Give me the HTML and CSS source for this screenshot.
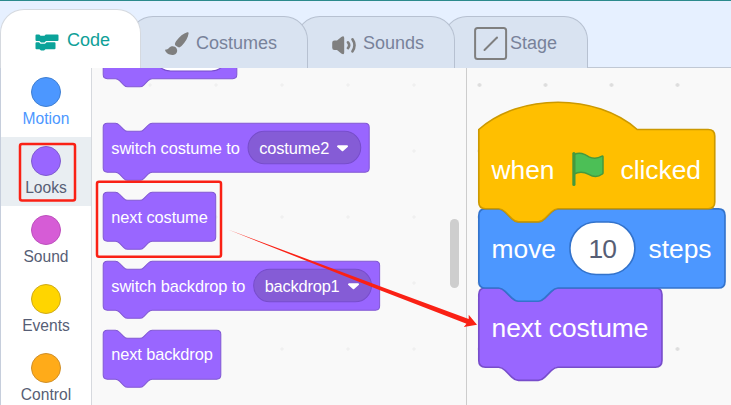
FILE: index.html
```html
<!DOCTYPE html>
<html lang="en">
<head>
<meta charset="utf-8">
<title>Block editor</title>
<link rel="stylesheet" href="styles.css">
</head>
<body>
<div class="app">
  <nav class="tabs">
    <div class="tab tab-code active">
      <svg class="icon-code" width="24" height="18" viewBox="0 0 24 18"><path d="M1.500.5H4.300L5.500 1.700H9.500L10.700.5H22.500q1 0 1 1V6q0 1-1 1H11L9.500 8.400H6L4.500 7H1.500q-1 0-1-1V1.500q0-1 1-1zM1.500 8.200H4L5.500 9.700H10L11.500 8.200H19.500q1 0 1 1V14.200q0 1-1 1H10.500L9 16.600H6L4.500 15.200H1.500q-1 0-1-1V9.200q0-1 1-1z"/></svg>
      <span>Code</span>
    </div>
    <div class="tab tab-costumes">
      <svg class="icon-costumes" width="24" height="24" viewBox="0 0 24 24"><path d="M22.300.3Q23.700-.2 23.600 1.300C23.200 5.500 20.300 10 17 13.600 15.200 15.600 13.800 16 12 14.600L10.500 13.400C9.500 12.500 9.800 11 11.200 9 14.500 4.700 18.500 1.300 22.300.3zM4.400 15.500C6.700 13.300 10.300 14 11.600 16.400 13 19 11.800 22 9 22.800 5.500 23.800 1.200 21.700.2 18.600-.1 17.700.3 17.300 1 17.400 2.600 17.700 3.400 16.500 4.400 15.500z"/></svg>
      <span>Costumes</span>
    </div>
    <div class="tab tab-sounds">
      <svg class="icon-sounds" width="24" height="19" viewBox="0 0 24 19"><path d="M2.500 4.500H5L9.300 1Q12.200-1 12.200 2V16.500Q12.200 19.500 9.300 17.500L5 14H2.500Q.2 14 .2 11.700V6.800Q.2 4.500 2.500 4.500z"/><path class="wave" d="M16 6.300q2.400 2.800 0 5.800M20.500 3.300q4 6 0 12"/></svg>
      <span>Sounds</span>
    </div>
    <div class="tab tab-stage">
      <svg class="icon-stage" width="34" height="34" viewBox="0 0 34 34"><rect x="1.100" y="1" width="31" height="31" rx="2.500"/><path d="M10.500 23 23 10.500"/></svg>
      <span>Stage</span>
    </div>
  </nav>

  <main class="editor">
    <aside class="categories">
      <div class="category motion"><i class="bubble"></i><span>Motion</span></div>
      <div class="category looks selected"><i class="bubble"></i><span>Looks</span></div>
      <div class="category sound"><i class="bubble"></i><span>Sound</span></div>
      <div class="category events"><i class="bubble"></i><span>Events</span></div>
      <div class="category control"><i class="bubble"></i><span>Control</span></div>
    </aside>

    <section class="palette">
      <svg class="block first" width="290" height="60" viewBox="0 0 290 60">
        <g transform="translate(1.200 1.200) scale(1.020)"><path class="purple" d="M0 4Q0 0 4 0H127Q131 0 131 4V43.500Q131 47.500 127 47.500H48c-2 0-3 1-4 2l-4 4c-1 1-2 2-4 2H24c-2 0-3-1-4-2l-4-4c-1-1-2-2-4-2H4Q0 47.500 0 43.500z"/><rect class="field" x="50" y="8" width="72" height="32" rx="16"/></g>
      </svg>
      <svg class="block" width="290" height="60" viewBox="0 0 290 60">
        <g transform="translate(1.200 1.200) scale(1.020)"><path class="purple" d="M0 4Q0 0 4 0H12c2 0 3 1 4 2l4 4c1 1 2 2 4 2H36c2 0 3-1 4-2l4-4c1-1 2-2 4-2H256.800Q260.800 0 260.800 4V44Q260.800 48 256.800 48H48c-2 0-3 1-4 2l-4 4c-1 1-2 2-4 2H24c-2 0-3-1-4-2l-4-4c-1-1-2-2-4-2H4Q0 48 0 44z"/><rect class="menu" x="142" y="8" width="110.500" height="31.800" rx="15.900"/></g>
        <text x="9.300" y="31.500" textLength="128.500">switch costume to</text><text x="157.300" y="31.500" textLength="70">costume2</text>
        <path class="caret" d="M236 24.300h9l-4.500 4z"/>
      </svg>
      <svg class="block" width="290" height="60" viewBox="0 0 290 60">
        <g transform="translate(1.200 1.200) scale(1.020)"><path class="purple" d="M0 4Q0 0 4 0H12c2 0 3 1 4 2l4 4c1 1 2 2 4 2H36c2 0 3-1 4-2l4-4c1-1 2-2 4-2H106.300Q110.300 0 110.300 4V44Q110.300 48 106.300 48H48c-2 0-3 1-4 2l-4 4c-1 1-2 2-4 2H24c-2 0-3-1-4-2l-4-4c-1-1-2-2-4-2H4Q0 48 0 44z"/></g>
        <text x="9.300" y="31.500" textLength="96.500">next costume</text>
      </svg>
      <svg class="block" width="290" height="60" viewBox="0 0 290 60">
        <g transform="translate(1.200 1.200) scale(1.020)"><path class="purple" d="M0 4Q0 0 4 0H12c2 0 3 1 4 2l4 4c1 1 2 2 4 2H36c2 0 3-1 4-2l4-4c1-1 2-2 4-2H267Q271 0 271 4V44Q271 48 267 48H48c-2 0-3 1-4 2l-4 4c-1 1-2 2-4 2H24c-2 0-3-1-4-2l-4-4c-1-1-2-2-4-2H4Q0 48 0 44z"/><rect class="menu" x="147.500" y="8" width="115.500" height="31.800" rx="15.900"/></g>
        <text x="9.300" y="31.500" textLength="134">switch backdrop to</text><text x="162.700" y="31.500" textLength="75">backdrop1</text>
        <path class="caret" d="M247 24.300h9l-4.500 4z"/>
      </svg>
      <svg class="block" width="290" height="60" viewBox="0 0 290 60">
        <g transform="translate(1.200 1.200) scale(1.020)"><path class="purple" d="M0 4Q0 0 4 0H12c2 0 3 1 4 2l4 4c1 1 2 2 4 2H36c2 0 3-1 4-2l4-4c1-1 2-2 4-2H111.300Q115.300 0 115.300 4V44Q115.300 48 111.300 48H48c-2 0-3 1-4 2l-4 4c-1 1-2 2-4 2H24c-2 0-3-1-4-2l-4-4c-1-1-2-2-4-2H4Q0 48 0 44z"/></g>
        <text x="9.300" y="31" textLength="101.500">next backdrop</text>
      </svg>
      <div class="scroll-thumb"></div>
    </section>

    <section class="workspace">
      <svg class="script" width="264" height="337" viewBox="467 68 264 337">
        <g transform="translate(478.800 288) scale(1.650)"><path class="purple" d="M0 4Q0 0 4 0H12c2 0 3 1 4 2l4 4c1 1 2 2 4 2H36c2 0 3-1 4-2l4-4c1-1 2-2 4-2H107Q111 0 111 4V44Q111 48 107 48H48c-2 0-3 1-4 2l-4 4c-1 1-2 2-4 2H24c-2 0-3-1-4-2l-4-4c-1-1-2-2-4-2H4Q0 48 0 44z"/></g>
        <g transform="translate(478.800 208.800) scale(1.650)"><path class="blue" d="M0 4Q0 0 4 0H12c2 0 3 1 4 2l4 4c1 1 2 2 4 2H36c2 0 3-1 4-2l4-4c1-1 2-2 4-2H145.200Q149.200 0 149.200 4V44Q149.200 48 145.200 48H48c-2 0-3 1-4 2l-4 4c-1 1-2 2-4 2H24c-2 0-3-1-4-2l-4-4c-1-1-2-2-4-2H4Q0 48 0 44z"/><rect class="number" x="55.200" y="8" width="39.400" height="31.800" rx="15.900"/></g>
        <g transform="translate(478.800 129.500) scale(1.650)"><path class="yellow" d="M0 0c25-22 71-22 96 0H139Q143 0 143 4V44Q143 48 139 48H48c-2 0-3 1-4 2l-4 4c-1 1-2 2-4 2H24c-2 0-3-1-4-2l-4-4c-1-1-2-2-4-2H4Q0 48 0 44z"/></g>
        <text x="491.500" y="179" textLength="63">when</text>
        <path class="flag" d="M574 154.500c6-2.500 10-.8 15 2.300 4 2 9 1.500 13-.6q1-.5 1 .6V173q0 .7-.7 1c-4 3-9.500 2.700-13.600.3-5-2.500-9-3-14.700-.3z"/>
        <path class="pole" d="M573.900 153.500V184.500"/>
        <text x="620.500" y="179" textLength="80.500">clicked</text>
        <text x="491.500" y="258" textLength="64.500">move</text>
        <text class="dark" x="588.500" y="258" textLength="28.500">10</text>
        <text x="648.500" y="258" textLength="63">steps</text>
        <text x="491.500" y="337" textLength="157">next costume</text>
      </svg>
    </section>
  </main>

  <svg class="annotations" width="731" height="405" viewBox="0 0 731 405">
    <rect x="20" y="144" width="55" height="56.500" rx="2"/>
    <rect x="97" y="181.800" width="124" height="75" rx="2"/>
    <path d="M228 229.500 380 286.200 468.700 319 468.700 314.700 477 324.800 463.800 326.900 466.500 323.800 380 290.200z"/>
  </svg>
</div>
</body>
</html>
```

FILE: styles.css
```css
* { box-sizing: border-box; }

body {
  margin: 0;
  font-family: "Liberation Sans", Arial, sans-serif;
}

.app {
  position: relative;
  width: 731px;
  height: 405px;
  overflow: hidden;
  display: flex;
  flex-direction: column;
  background: #e6f0ff;
  border-top: 1px solid #2b8a8c;
}

.tabs {
  display: flex;
  align-items: flex-end;
  height: 67px;
  flex: none;
}

.tab {
  position: relative;
  display: flex;
  height: 52px;
  border: 1px solid #b7c1d1;
  border-bottom: 0;
  border-radius: 24px 24px 0 0;
  background: #d9e3f1;
  color: #78829a;
  font-size: 18px;
  line-height: 20px;
}

.tab svg { fill: #7f7f7f; flex: none; }

.tab-code {
  z-index: 4;
  width: 141px;
  height: 59px;
  padding: 20px 0 0 34px;
  gap: 8px;
  background: #fff;
  color: #0fa098;
  border-color: #d5d9df;
}

.tab-code .icon-code { fill: #0ba39a; margin-top: 4px; }

.tab-costumes {
  z-index: 3;
  width: 179px;
  margin-left: -12px;
  padding: 16px 0 0 35px;
  gap: 7px;
}

.tab-costumes svg { margin-top: -1px; }

.tab-sounds {
  z-index: 2;
  width: 159px;
  margin-left: -12px;
  padding: 16px 0 0 35px;
  gap: 7px;
}

.tab-sounds svg { margin-top: 3px; }
.tab-sounds .wave { fill: none; stroke: #7f7f7f; stroke-width: 2.6; stroke-linecap: round; }

.tab-stage {
  z-index: 1;
  width: 145px;
  margin-left: -12px;
  padding: 16px 0 0 30px;
  gap: 2px;
}

.tab-stage svg { margin-top: -6px; fill: none; stroke: #7f7f7f; stroke-width: 2; stroke-linecap: round; }

.editor { display: flex; flex: 1; min-height: 0; }

.categories {
  width: 92px;
  border-left: 1px solid #c6cedc;
  border-right: 1px solid #d6d9de;
  background: #fff;
}

.category {
  display: flex;
  flex-direction: column;
  align-items: center;
  height: 69px;
  padding-top: 9px;
  font-size: 15.600px;
  line-height: 18px;
  color: #575e75;
}

.bubble {
  width: 30px;
  height: 30px;
  margin-bottom: 3px;
  border: 1px solid;
  border-radius: 50%;
}

.motion { color: #4c97ff; }
.motion .bubble { background: #4c97ff; border-color: #3f7fd2; }
.looks .bubble { background: #9966ff; border-color: #7f5bcf; }
.sound .bubble { background: #d65cd6; border-color: #bd50bd; }
.events .bubble { background: #ffd500; border-color: #cfaa1a; }
.control .bubble { background: #ffab19; border-color: #cf8f2a; }
.selected { background: #e9eef2; }

.palette {
  position: relative;
  width: 375px;
  display: flex;
  flex-direction: column;
  gap: 9px;
  padding-left: 10px;
  overflow: hidden;
  border-right: 1px solid #cdcdcd;
  background: radial-gradient(circle, #f0f0f0 1.300px, transparent 2px) 25px -16px / 66px 66px #f9f9f9;
}

.block { flex: none; }
.block.first { margin-top: -39px; margin-bottom: 24px; }
.block text { font-size: 16.400px; fill: #fff; }

.purple { fill: #9966ff; stroke: #774dcb; }
.palette .purple { stroke: #8259d4; }
.blue { fill: #4c97ff; stroke: #3373cc; }
.yellow { fill: #ffbf00; stroke: #cc9900; }
.field { fill: #fff; stroke: #774dcb; }
.number { fill: #fff; stroke: #3373cc; }
.menu { fill: #855cd6; stroke: #774dcb; }
.caret { fill: #fff; stroke: #fff; stroke-width: 2; stroke-linejoin: round; }

.scroll-thumb {
  position: absolute;
  right: 7px;
  top: 151px;
  width: 9px;
  height: 69px;
  border-radius: 5px;
  background: #cecece;
}

.workspace {
  width: 264px;
  box-shadow: inset 0 1px #f9f9f9, 0 -1px #c0c8d4;
  background: radial-gradient(circle, #dddddd 1.500px, transparent 2.200px) -20.500px -16px / 66px 66px #f9f9f9;
}

.script { display: block; }
.script text { font-size: 26.400px; fill: #fff; }
.script .dark { fill: #575e75; }
.flag { fill: #4cbf56; stroke: #45993d; stroke-width: 1.500; }
.pole { stroke: #45993d; stroke-width: 3.200; stroke-linecap: round; }

.annotations { position: absolute; left: 0; top: -1px; z-index: 10; }
.annotations rect { fill: none; stroke: #fa2115; stroke-width: 2.500; }
.annotations path { fill: #fa2115; }
```
